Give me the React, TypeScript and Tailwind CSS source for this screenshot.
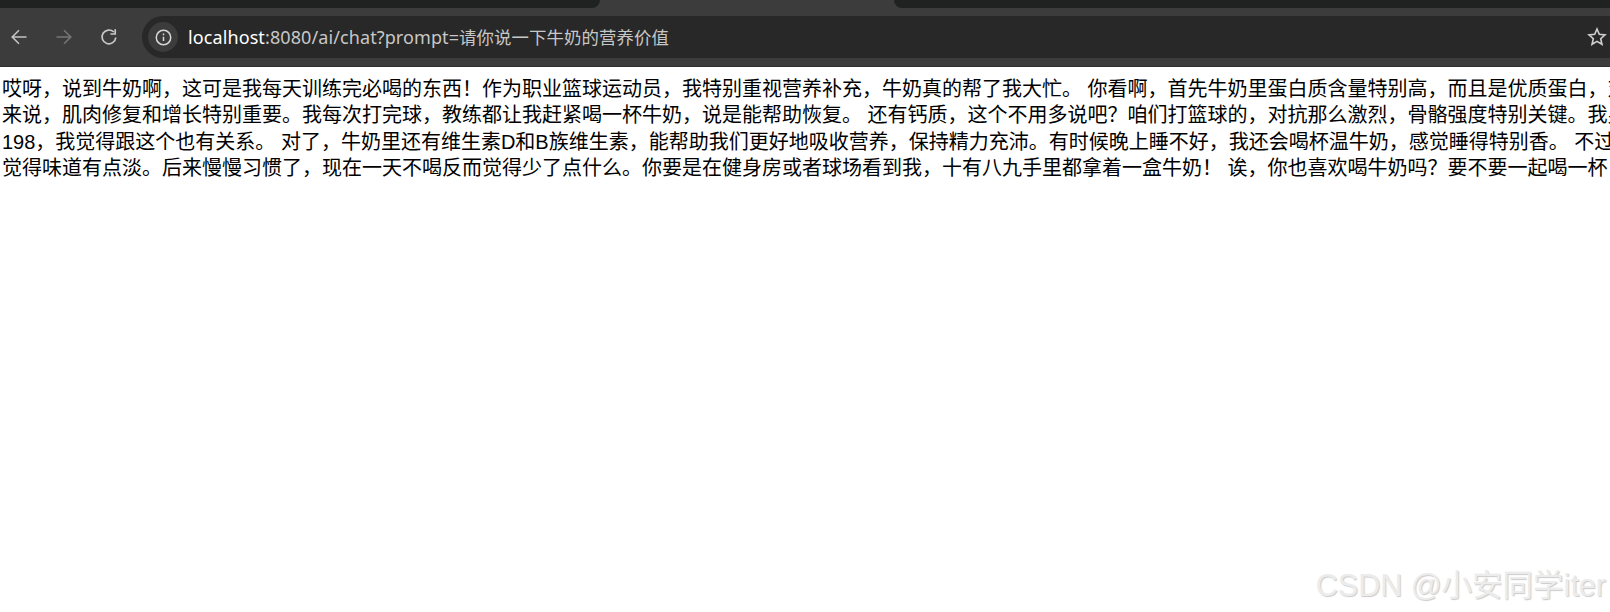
import React from "react";

const lines = [
  "哎呀，说到牛奶啊，这可是我每天训练完必喝的东西！作为职业篮球运动员，我特别重视营养补充，牛奶真的帮了我大忙。 你看啊，首先牛奶里蛋白质含量特别高，而且是优质蛋白，对",
  "来说，肌肉修复和增长特别重要。我每次打完球，教练都让我赶紧喝一杯牛奶，说是能帮助恢复。 还有钙质，这个不用多说吧？咱们打篮球的，对抗那么激烈，骨骼强度特别关键。我身",
  "198，我觉得跟这个也有关系。 对了，牛奶里还有维生素D和B族维生素，能帮助我们更好地吸收营养，保持精力充沛。有时候晚上睡不好，我还会喝杯温牛奶，感觉睡得特别香。 不过",
  "觉得味道有点淡。后来慢慢习惯了，现在一天不喝反而觉得少了点什么。你要是在健身房或者球场看到我，十有八九手里都拿着一盒牛奶！ 诶，你也喜欢喝牛奶吗？要不要一起喝一杯",
];

export default function App() {
  return (
    <div className="relative flex h-[612px] w-[1610px] flex-col overflow-hidden bg-white font-['Liberation_Sans','Noto_Sans_CJK_SC',sans-serif]">
      <div className="h-2 bg-[#3c3c3c]">
        <div className="flex h-2">
          <div className="h-2 w-[600px] rounded-br-[10px] bg-[#202222]" />
          <div className="h-2 w-[294px]" />
          <div className="h-2 flex-1 rounded-bl-[10px] bg-[#202222]" />
        </div>
      </div>
      <div className="flex h-[59px] items-center border-b border-[#303030] bg-[#3c3c3c]">
        <div className="flex w-[142px] items-center gap-[25px] pl-[9px]">
          <svg width="20" height="20" viewBox="0 0 20 20" fill="none" stroke="#c4c4c4" strokeWidth="1.6">
            <path d="M17.500 10H3.500M10 3.200 3.200 10l6.800 6.800" />
          </svg>
          <svg width="20" height="20" viewBox="0 0 20 20" fill="none" stroke="#757575" strokeWidth="1.6">
            <path d="M2.500 10h14M10 3.200 16.800 10 10 16.800" />
          </svg>
          <svg width="20" height="20" viewBox="0 0 20 20" fill="none" stroke="#c8c8c8" strokeWidth="1.7">
            <path d="M16.800 10.500A6.900 6.900 0 1 1 14.800 5" />
            <path d="M16.200 2.200v4.800h-4.800" />
          </svg>
        </div>
        <div className="flex h-[42px] flex-1 items-center rounded-l-full bg-[#282828] pl-[6px]">
          <div className="flex h-[30px] w-[30px] items-center justify-center rounded-full bg-[#3c3c3c]">
            <svg width="17" height="17" viewBox="0 0 16 16" fill="none" stroke="#d8d8d8" strokeWidth="1.400">
              <circle cx="8" cy="8" r="6.800" />
              <path d="M8 7.200v4.200M8 4.300v1.500" />
            </svg>
          </div>
          <div className="ml-[10px] flex-1 font-['Noto_Sans','Noto_Sans_CJK_SC',sans-serif] text-[18px] leading-[24px] tracking-[0.1px] text-[#c7c7c7]">
            <span className="text-white">localhost</span>:8080/ai/chat?prompt=<span className="text-[17.400px]">请你说一下牛奶的营养价值</span>
          </div>
          <svg className="mr-[3px]" width="20" height="20" viewBox="0 0 20 20" fill="none" stroke="#cfcfcf" strokeWidth="1.600">
            <path d="m10 2 2.300 5.300 5.700.6-4.300 3.800 1.300 5.600-5-2.900-5 2.900 1.300-5.600-4.300-3.800 5.700-.6z" />
          </svg>
        </div>
      </div>
      <div className="flex-1 pt-[9px] pl-[2px] text-[20px] leading-[26.400px] text-black">
        {lines.map((l) => (
          <div key={l} className="whitespace-nowrap">{l}</div>
        ))}
      </div>
      <div className="absolute right-[4px] bottom-[7px] text-[30.500px] leading-[40px] whitespace-nowrap text-[#ececec] [text-shadow:1px_1px_1px_#cbcbcb]">
        CSDN @小安同学iter
      </div>
    </div>
  );
}
